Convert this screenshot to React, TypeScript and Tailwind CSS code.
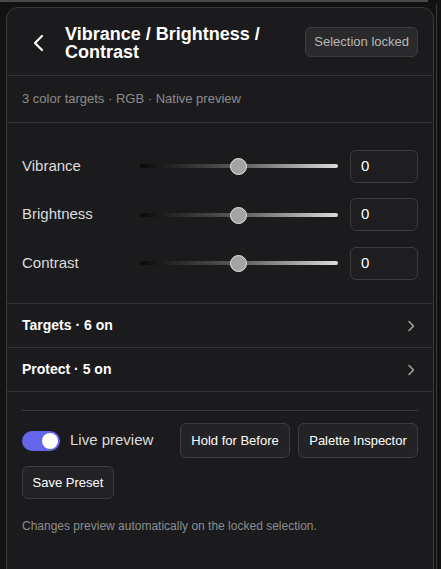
import React from "react";

function Slider({ label }: { label: string }) {
  return (
    <div className="flex items-center h-[32px]">
      <div className="w-[118px] text-[15px] text-[#dcdcdc]">{label}</div>
      <div className="relative w-[198px] h-[16px] flex items-center">
        <div className="w-full h-[4px] rounded-full bg-[linear-gradient(to_right,#0a0a0a,#5a5a5a_50%,#dcdcdc)]" />
        <div className="absolute left-[90px] top-0 w-[17px] h-[17px] rounded-full bg-[#a3a3a3] border border-[#e5e5e5]" />
      </div>
      <div className="ml-[12px] w-[68px] h-[33px] rounded-[6px] border border-[#3d3d40] bg-[#1e1e20] flex items-center pl-[10px] text-[15px] text-white">
        0
      </div>
    </div>
  );
}

function Row({ label }: { label: string }) {
  return (
    <div className="h-[44px] flex items-center justify-between px-[15px] border-b border-[#333336]">
      <span className="text-[14px] font-bold text-white">{label}</span>
      <svg width="10" height="14" viewBox="0 0 10 14" fill="none" className="mr-[2px]">
        <path d="M3 2.5 L7.5 7 L3 11.5" stroke="#a0a0a0" strokeWidth="1.6" strokeLinecap="round" strokeLinejoin="round" />
      </svg>
    </div>
  );
}

export default function App() {
  return (
    <div
      className="w-[441px] h-[569px] bg-[#121213] overflow-hidden relative"
      style={{ fontFamily: '"Liberation Sans", Arial, sans-serif' }}
    >
      <div className="absolute left-0 top-0 w-[428px] h-[2px] bg-[#4a4a4c]" />
      <div className="absolute left-[436px] top-[4px] w-[1px] h-[565px] bg-[#3a3a3c]" />
      <div className="ml-[6px] mt-[7px] w-[428px] h-[600px] rounded-[12px] border border-[#3a3a3d] bg-[#1b1b1d]">
        <div className="flex items-start h-[68px] border-b border-[#333336] pl-[24px] pr-[15px]">
          <svg width="16" height="20" viewBox="0 0 16 20" fill="none" className="mt-[25px]">
            <path d="M11 3 L4 10 L11 17" stroke="#ffffff" strokeWidth="2.2" strokeLinecap="round" strokeLinejoin="round" />
          </svg>
          <div className="ml-[18px] mt-[17px] w-[220px] text-[18px] leading-[18px] font-bold text-white">
            Vibrance / Brightness / Contrast
          </div>
          <div className="ml-auto mt-[19px] h-[30px] px-[8px] rounded-[6px] border border-[#3d3d40] bg-[#2a2a2c] text-[13px] text-[#b8b8b8] flex items-center">
            Selection locked
          </div>
        </div>
        <div className="h-[47px] flex items-center px-[15px] text-[13px] text-[#8c8c8c] border-b border-[#333336]">
          3 color targets · RGB · Native preview
        </div>
        <div className="px-[15px] pt-[27px] pb-[24px] flex flex-col gap-[16.5px] border-b border-[#333336]">
          <Slider label="Vibrance" />
          <Slider label="Brightness" />
          <Slider label="Contrast" />
        </div>
        <Row label="Targets · 6 on" />
        <Row label="Protect · 5 on" />
        <div className="px-[15px] pt-[18px]">
          <div className="h-[1px] bg-[#3a3a3d]" />
          <div className="flex items-center mt-[12px] gap-[8px]">
            <div className="w-[38px] h-[20px] rounded-full bg-[#6466e9] relative">
              <div className="absolute right-[2px] top-[2px] w-[16px] h-[16px] rounded-full bg-white" />
            </div>
            <span className="ml-[2px] text-[15px] text-[#dcdcdc]">Live preview</span>
            <div className="ml-auto flex gap-[8px]">
              <div className="h-[35px] w-[110px] rounded-[6px] border border-[#3d3d40] bg-[#232325] text-[13px] text-white flex items-center justify-center">
                Hold for Before
              </div>
              <div className="h-[35px] w-[120px] rounded-[6px] border border-[#3d3d40] bg-[#232325] text-[13px] text-white flex items-center justify-center">
                Palette Inspector
              </div>
            </div>
          </div>
          <div className="mt-[8px] h-[33px] w-[92px] rounded-[6px] border border-[#3d3d40] bg-[#232325] text-[13px] text-white flex items-center justify-center">
            Save Preset
          </div>
          <div className="mt-[18px] text-[12px] text-[#8c8c8c]">
            Changes preview automatically on the locked selection.
          </div>
        </div>
      </div>
    </div>
  );
}
